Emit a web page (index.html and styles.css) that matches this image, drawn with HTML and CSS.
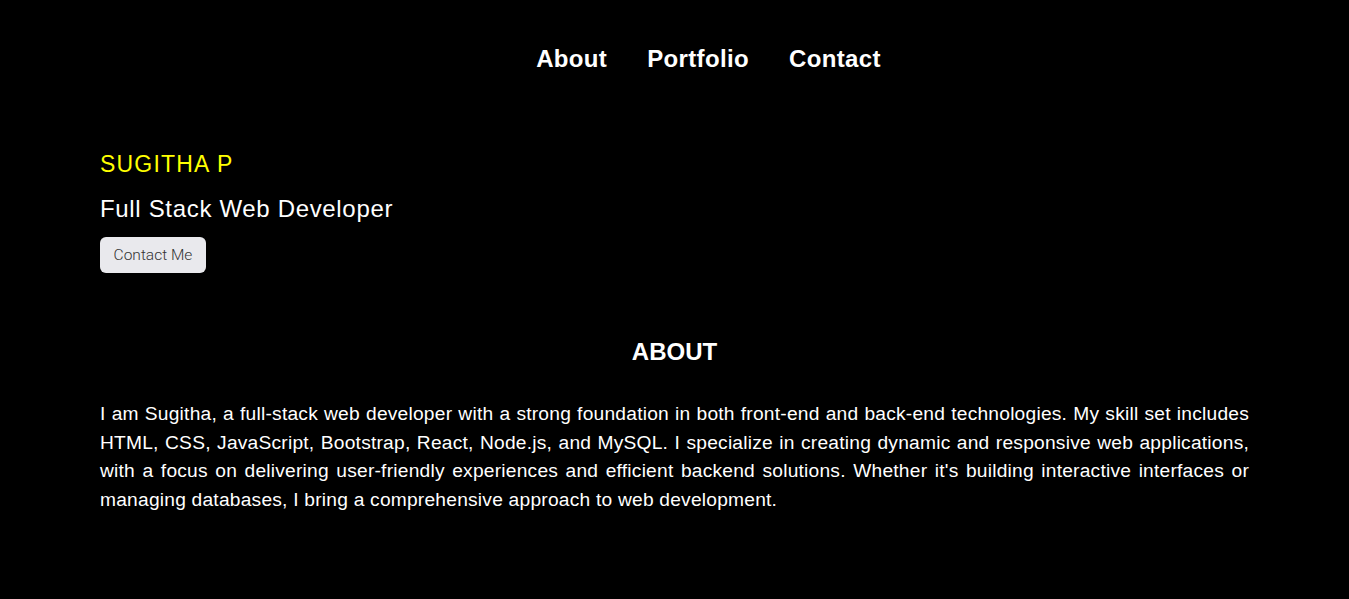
FILE: index.html
```html
<!DOCTYPE html>
<html lang="en">
<head>
<meta charset="utf-8">
<title>Sugitha P</title>
<link rel="stylesheet" href="styles.css">
</head>
<body>
<nav class="nav">
  <a href="#about">About</a>
  <a href="#portfolio">Portfolio</a>
  <a href="#contact">Contact</a>
</nav>
<section class="hero">
  <h1 class="name">SUGITHA P</h1>
  <h2 class="role">Full Stack Web Developer</h2>
  <button class="btn">Contact Me</button>
</section>
<section class="about" id="about">
  <h2 class="about-title">ABOUT</h2>
  <p class="about-text">I am Sugitha, a full-stack web developer with a strong foundation in both front-end and back-end technologies. My skill set includes HTML, CSS, JavaScript, Bootstrap, React, Node.js, and MySQL. I specialize in creating dynamic and responsive web applications, with a focus on delivering user-friendly experiences and efficient backend solutions. Whether it's building interactive interfaces or managing databases, I bring a comprehensive approach to web development.</p>
</section>
</body>
</html>
```
FILE: styles.css
```css
html, body {
  margin: 0;
  padding: 0;
  background: #000;
  color: #fff;
  font-family: "Liberation Sans", Arial, sans-serif;
}
.nav {
  display: flex;
  justify-content: center;
  gap: 40px;
  padding: 44px 0 0 68px;
  height: 30px;
}
.nav a {
  color: #fff;
  text-decoration: none;
  font-weight: bold;
  font-size: 24px;
  line-height: 30px;
  letter-spacing: 0.35px;
}
.hero {
  padding: 75px 100px 0;
}
.name {
  margin: 0;
  font-size: 23px;
  font-weight: normal;
  color: #ffff00;
  line-height: 30px;
  letter-spacing: 1.2px;
}
.role {
  margin: 15px 0 0;
  font-size: 24px;
  font-weight: normal;
  line-height: 30px;
  letter-spacing: 0.67px;
}
.btn {
  margin-top: 13px;
  width: 106px;
  height: 36px;
  border: none;
  border-radius: 6px;
  background: #e9e9ed;
  color: #333;
  font-family: Roboto, "Liberation Sans", sans-serif;
  font-weight: 300;
  font-size: 15.5px;
  padding: 0;
}
.about {
  padding: 0 100px;
}
.about-title {
  margin: 64px 0 0;
  text-align: center;
  font-size: 24px;
  font-weight: bold;
  line-height: 30px;
}
.about-text {
  margin: 33px 0 0;
  font-size: 19.2px;
  line-height: 28.7px;
  letter-spacing: 0.22px;
  text-align: justify;
}
```
